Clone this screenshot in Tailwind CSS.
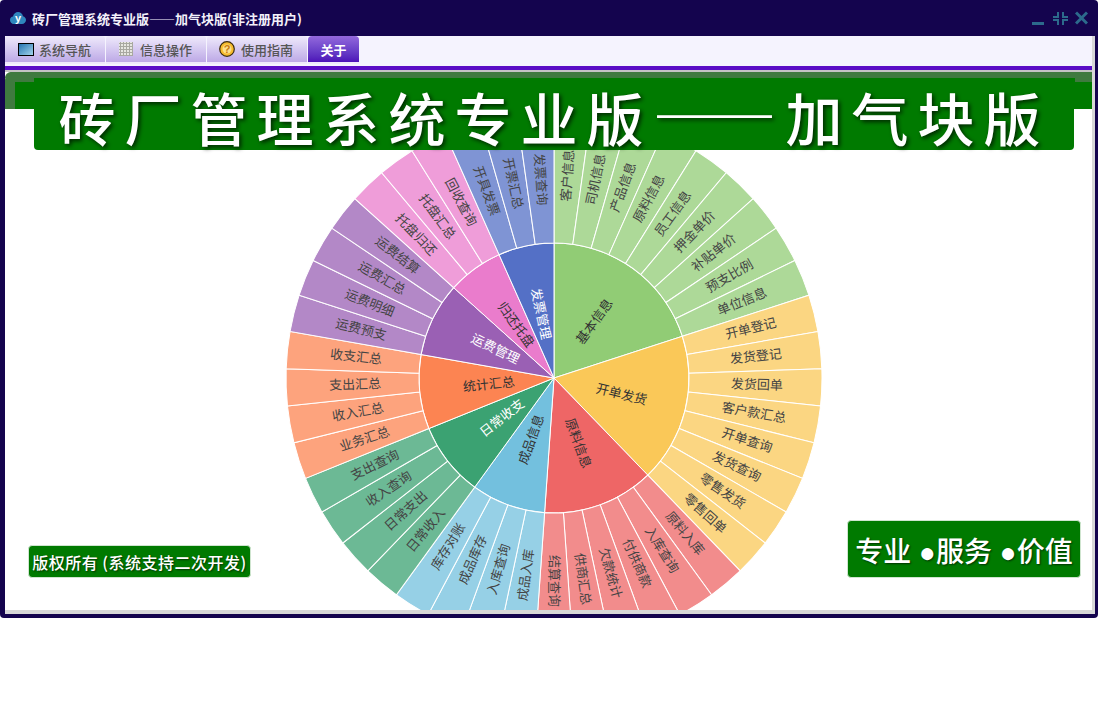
<!DOCTYPE html>
<html lang="zh-CN">
<head>
<meta charset="utf-8">
<title>砖厂管理系统专业版</title>
<script src="https://cdn.jsdelivr.net/npm/@tailwindcss/browser@4"></script>
</head>
<body class="bg-white font-['Noto_Sans_CJK_SC','Noto_Sans',sans-serif]">
<div class="w-[1099px] h-[723px] overflow-hidden bg-white">
  <div class="w-[1098px] h-[618px] bg-[#14044e] rounded-[4px] pl-[5px] pr-[3px] pb-[4px] flex flex-col">
    <!-- title bar -->
    <div class="h-[36px] shrink-0 flex items-center pr-[7px] -ml-[5px] pl-[10px]">
      <svg class="w-[16px] h-[14px] mr-[6px]" viewBox="0 0 16 14"><path d="M4 13C1.500 13 0 11 0 9C0 7 1.500 5.800 3 5.600C3.500 2.500 5.800 1 8 1C10.500 1 12.500 2.800 13 5.300C14.800 5.800 16 7.300 16 9C16 11.300 14.200 13 12 13Z" fill="#2f86bd"/><text x="8" y="11" text-anchor="middle" font-size="11" font-weight="700" fill="#fff" font-family="Liberation Sans">y</text></svg>
      <span class="text-[13px] font-bold text-[#f3f1fa] leading-none">砖厂管理系统专业版——加气块版(非注册用户)</span>
      <div class="ml-auto flex items-center gap-[7px]">
        <svg class="w-[14px] h-[14px]" viewBox="0 0 14 14"><rect x="0" y="11" width="12" height="3" fill="#2c6a8c"/></svg>
        <svg class="w-[15px] h-[14px]" viewBox="0 0 15 14" fill="none" stroke="#2c6a8c" stroke-width="2"><path d="M5 1V6H0M10 1V6H15M5 14V9H0M10 14V9H15"/></svg>
        <svg class="w-[13px] h-[14px]" viewBox="0 0 13 14" fill="none" stroke="#2c6a8c" stroke-width="3"><path d="M1 1.500L12 12.500M12 1.500L1 12.500"/></svg>
      </div>
    </div>
    <!-- body -->
    <div class="flex-1 min-h-0 bg-[#d8d8d8] pr-[3px] pb-[4px]">
      <div class="h-full flex flex-col">
        <!-- tabs -->
        <div class="h-[30px] shrink-0 bg-[#f5f3fe] flex gap-[1px]">
          <div class="w-[100px] h-[28px] rounded-t-[3px] border-b-2 border-[#efe9fb] bg-linear-to-b from-[#efeafb] to-[#bda9e6] flex items-center pl-[13px] gap-[5px]">
            <svg class="w-[16px] h-[13px]" viewBox="0 0 16 13"><defs><linearGradient id="mon" x1="0" y1="0" x2="1" y2="1"><stop offset="0" stop-color="#1f6fae"/><stop offset="1" stop-color="#a8d8ee"/></linearGradient></defs><rect x="0.500" y="0.500" width="15" height="12" fill="url(#mon)" stroke="#000"/></svg>
            <span class="text-[13px] font-medium text-[#555] leading-none pt-[1px]">系统导航</span>
          </div>
          <div class="w-[100px] h-[28px] rounded-t-[3px] border-b-2 border-[#efe9fb] bg-linear-to-b from-[#efeafb] to-[#bda9e6] flex items-center pl-[13px] gap-[7px]">
            <svg class="w-[14px] h-[14px]" viewBox="0 0 14 14"><rect width="14" height="14" fill="#e6e6e0"/><path d="M1.500 0V14M4.500 0V14M7.500 0V14M10.500 0V14M13.500 0V14M0 1.500H14M0 4.500H14M0 7.500H14M0 10.500H14M0 13.500H14" stroke="#a8a8a0" stroke-width="1"/></svg>
            <span class="text-[13px] font-medium text-[#555] leading-none pt-[1px]">信息操作</span>
          </div>
          <div class="w-[100px] h-[28px] rounded-t-[3px] border-b-2 border-[#efe9fb] bg-linear-to-b from-[#efeafb] to-[#bda9e6] flex items-center pl-[12px] gap-[6px]">
            <svg class="w-[16px] h-[16px]" viewBox="0 0 16 16"><circle cx="8" cy="8" r="7.300" fill="#f7bc2e" stroke="#3c2c10" stroke-width="1.200"/><circle cx="8" cy="8" r="4.500" fill="#fde08a"/><text x="8" y="12" text-anchor="middle" font-size="11" font-weight="700" fill="#c87a10" font-family="Liberation Sans">?</text></svg>
            <span class="text-[13px] font-medium text-[#555] leading-none pt-[1px]">使用指南</span>
          </div>
          <div class="w-[51px] h-[28px] rounded-t-[4px] border-b-2 border-[#efe9fb] bg-linear-to-b from-[#9468dc] to-[#4d0fb8] flex items-center justify-center">
            <span class="text-[13px] font-bold text-white leading-none">关于</span>
          </div>
        </div>
        <div class="h-[4px] shrink-0 bg-[#5a0cc6]"></div>
        <div class="h-[2px] shrink-0 bg-[#c4c4c4]"></div>
        <!-- content -->
        <div class="relative flex-1 min-h-0 bg-white overflow-hidden">
          <div class="h-[37px] bg-[#007a00] rounded-tl-[8px] border-l-[10px] border-[#3f7a3f] flex flex-col">
            <div class="h-[6px] -ml-[10px] bg-[#3f7a3f] rounded-tl-[8px]"></div>
            <div class="h-[4px] flex justify-between">
              <div class="w-[19px] bg-[#3f7a3f]"></div>
              <div class="w-[17px] bg-[#3f7a3f]"></div>
            </div>
          </div>
          <!-- sunburst -->
          <svg class="absolute left-0 top-0" width="1087" height="538" viewBox="0 0 1087 538" font-size="13" font-family="Noto Sans CJK SC, sans-serif" text-anchor="middle" dominant-baseline="central">
            <defs><path id="seg" d="M0 -135L0 -268A268 268 0 0 1 37.300 -265.390L18.790 -133.690A135 135 0 0 0 0 -135Z" stroke="#fff" stroke-width="1"/></defs>
            <g transform="translate(549 306)">
              <!-- inner ring -->
              <g stroke="#fff" stroke-width="1">
                <path d="M0 0L0 -135A135 135 0 0 1 128.390 -41.720Z" fill="#91cc75"/>
                <path d="M0 0L128.390 -41.720A135 135 0 0 1 93.780 97.110Z" fill="#fac858"/>
                <path d="M0 0L93.780 97.110A135 135 0 0 1 -9.420 134.670Z" fill="#ee6666"/>
                <path d="M0 0L-9.420 134.670A135 135 0 0 1 -79.350 109.220Z" fill="#73c0de"/>
                <path d="M0 0L-79.350 109.220A135 135 0 0 1 -125.170 50.570Z" fill="#3ba272"/>
                <path d="M0 0L-125.170 50.570A135 135 0 0 1 -132.950 -23.440Z" fill="#fc8452"/>
                <path d="M0 0L-132.950 -23.440A135 135 0 0 1 -100.330 -90.330Z" fill="#9a60b4"/>
                <path d="M0 0L-100.330 -90.330A135 135 0 0 1 -54.910 -123.330Z" fill="#ea7ccc"/>
                <path d="M0 0L-54.910 -123.330A135 135 0 0 1 0 -135Z" fill="#5470c6"/>
              </g>
              <!-- outer ring -->
              <g fill="#91cc75" fill-opacity="0.75">
                <use href="#seg"/><use href="#seg" transform="rotate(8)"/><use href="#seg" transform="rotate(16)"/><use href="#seg" transform="rotate(24)"/><use href="#seg" transform="rotate(32)"/><use href="#seg" transform="rotate(40)"/><use href="#seg" transform="rotate(48)"/><use href="#seg" transform="rotate(56)"/><use href="#seg" transform="rotate(64)"/>
              </g>
              <g fill="#fac858" fill-opacity="0.75">
                <use href="#seg" transform="rotate(72)"/><use href="#seg" transform="rotate(80)"/><use href="#seg" transform="rotate(88)"/><use href="#seg" transform="rotate(96)"/><use href="#seg" transform="rotate(104)"/><use href="#seg" transform="rotate(112)"/><use href="#seg" transform="rotate(120)"/><use href="#seg" transform="rotate(128)"/>
              </g>
              <g fill="#ee6666" fill-opacity="0.75">
                <use href="#seg" transform="rotate(136)"/><use href="#seg" transform="rotate(144)"/><use href="#seg" transform="rotate(152)"/><use href="#seg" transform="rotate(160)"/><use href="#seg" transform="rotate(168)"/><use href="#seg" transform="rotate(176)"/>
              </g>
              <g fill="#73c0de" fill-opacity="0.75">
                <use href="#seg" transform="rotate(184)"/><use href="#seg" transform="rotate(192)"/><use href="#seg" transform="rotate(200)"/><use href="#seg" transform="rotate(208)"/>
              </g>
              <g fill="#3ba272" fill-opacity="0.75">
                <use href="#seg" transform="rotate(216)"/><use href="#seg" transform="rotate(224)"/><use href="#seg" transform="rotate(232)"/><use href="#seg" transform="rotate(240)"/>
              </g>
              <g fill="#fc8452" fill-opacity="0.75">
                <use href="#seg" transform="rotate(248)"/><use href="#seg" transform="rotate(256)"/><use href="#seg" transform="rotate(264)"/><use href="#seg" transform="rotate(272)"/>
              </g>
              <g fill="#9a60b4" fill-opacity="0.75">
                <use href="#seg" transform="rotate(280)"/><use href="#seg" transform="rotate(288)"/><use href="#seg" transform="rotate(296)"/><use href="#seg" transform="rotate(304)"/>
              </g>
              <g fill="#ea7ccc" fill-opacity="0.75">
                <use href="#seg" transform="rotate(312)"/><use href="#seg" transform="rotate(320)"/><use href="#seg" transform="rotate(328)"/>
              </g>
              <g fill="#5470c6" fill-opacity="0.75">
                <use href="#seg" transform="rotate(336)"/><use href="#seg" transform="rotate(344)"/><use href="#seg" transform="rotate(352)"/>
              </g>
              <!-- inner labels -->
              <g fill="#333">
                <text transform="rotate(36) translate(0 -67.500) rotate(-90) translate(2 -1.500)">基本信息</text>
                <text transform="rotate(104) translate(0 -67.500) rotate(-90) translate(2 -1.500)">开单发货</text>
                <text transform="rotate(160) translate(0 -67.500) rotate(-90) translate(2 -1.500)">原料信息</text>
                <text transform="rotate(200) translate(0 -67.500) rotate(90) translate(2 -1.500)">成品信息</text>
                <text transform="rotate(232) translate(0 -67.500) rotate(90) translate(2 -1.500)" fill="#fff">日常收支</text>
                <text transform="rotate(264) translate(0 -67.500) rotate(90) translate(2 -1.500)">统计汇总</text>
                <text transform="rotate(296) translate(0 -67.500) rotate(90) translate(2 -1.500)" fill="#fff">运费管理</text>
                <text transform="rotate(324) translate(0 -67.500) rotate(90) translate(2 -1.500)">归还托盘</text>
                <text transform="rotate(348) translate(0 -67.500) rotate(90) translate(2 -1.500)" fill="#fff">发票管理</text>
              </g>
              <!-- outer labels -->
              <g fill="#444">
                <text transform="rotate(4) translate(0 -201) rotate(-90) translate(2 -1.500)">客户信息</text>
                <text transform="rotate(12) translate(0 -201) rotate(-90) translate(2 -1.500)">司机信息</text>
                <text transform="rotate(20) translate(0 -201) rotate(-90) translate(2 -1.500)">产品信息</text>
                <text transform="rotate(28) translate(0 -201) rotate(-90) translate(2 -1.500)">原料信息</text>
                <text transform="rotate(36) translate(0 -201) rotate(-90) translate(2 -1.500)">员工信息</text>
                <text transform="rotate(44) translate(0 -201) rotate(-90) translate(2 -1.500)">押金单价</text>
                <text transform="rotate(52) translate(0 -201) rotate(-90) translate(2 -1.500)">补贴单价</text>
                <text transform="rotate(60) translate(0 -201) rotate(-90) translate(2 -1.500)">预支比例</text>
                <text transform="rotate(68) translate(0 -201) rotate(-90) translate(2 -1.500)">单位信息</text>
                <text transform="rotate(76) translate(0 -201) rotate(-90) translate(2 -1.500)">开单登记</text>
                <text transform="rotate(84) translate(0 -201) rotate(-90) translate(2 -1.500)">发货登记</text>
                <text transform="rotate(92) translate(0 -201) rotate(-90) translate(2 -1.500)">发货回单</text>
                <text transform="rotate(100) translate(0 -201) rotate(-90) translate(2 -1.500)">客户款汇总</text>
                <text transform="rotate(108) translate(0 -201) rotate(-90) translate(2 -1.500)">开单查询</text>
                <text transform="rotate(116) translate(0 -201) rotate(-90) translate(2 -1.500)">发货查询</text>
                <text transform="rotate(124) translate(0 -201) rotate(-90) translate(2 -1.500)">零售发货</text>
                <text transform="rotate(132) translate(0 -201) rotate(-90) translate(2 -1.500)">零售回单</text>
                <text transform="rotate(140) translate(0 -201) rotate(-90) translate(2 -1.500)">原料入库</text>
                <text transform="rotate(148) translate(0 -201) rotate(-90) translate(2 -1.500)">入库查询</text>
                <text transform="rotate(156) translate(0 -201) rotate(-90) translate(2 -1.500)">付供商款</text>
                <text transform="rotate(164) translate(0 -201) rotate(-90) translate(2 -1.500)">欠款统计</text>
                <text transform="rotate(172) translate(0 -201) rotate(-90) translate(2 -1.500)">供商汇总</text>
                <text transform="rotate(180) translate(0 -201) rotate(-90) translate(2 -1.500)">结算查询</text>
                <text transform="rotate(188) translate(0 -201) rotate(90) translate(2 -1.500)">成品入库</text>
                <text transform="rotate(196) translate(0 -201) rotate(90) translate(2 -1.500)">入库查询</text>
                <text transform="rotate(204) translate(0 -201) rotate(90) translate(2 -1.500)">成品库存</text>
                <text transform="rotate(212) translate(0 -201) rotate(90) translate(2 -1.500)">库存对账</text>
                <text transform="rotate(220) translate(0 -201) rotate(90) translate(2 -1.500)">日常收入</text>
                <text transform="rotate(228) translate(0 -201) rotate(90) translate(2 -1.500)">日常支出</text>
                <text transform="rotate(236) translate(0 -201) rotate(90) translate(2 -1.500)">收入查询</text>
                <text transform="rotate(244) translate(0 -201) rotate(90) translate(2 -1.500)">支出查询</text>
                <text transform="rotate(252) translate(0 -201) rotate(90) translate(2 -1.500)">业务汇总</text>
                <text transform="rotate(260) translate(0 -201) rotate(90) translate(2 -1.500)">收入汇总</text>
                <text transform="rotate(268) translate(0 -201) rotate(90) translate(2 -1.500)">支出汇总</text>
                <text transform="rotate(276) translate(0 -201) rotate(90) translate(2 -1.500)">收支汇总</text>
                <text transform="rotate(284) translate(0 -201) rotate(90) translate(2 -1.500)">运费预支</text>
                <text transform="rotate(292) translate(0 -201) rotate(90) translate(2 -1.500)">运费明细</text>
                <text transform="rotate(300) translate(0 -201) rotate(90) translate(2 -1.500)">运费汇总</text>
                <text transform="rotate(308) translate(0 -201) rotate(90) translate(2 -1.500)">运费结算</text>
                <text transform="rotate(316) translate(0 -201) rotate(90) translate(2 -1.500)">托盘归还</text>
                <text transform="rotate(324) translate(0 -201) rotate(90) translate(2 -1.500)">托盘汇总</text>
                <text transform="rotate(332) translate(0 -201) rotate(90) translate(2 -1.500)">回收查询</text>
                <text transform="rotate(340) translate(0 -201) rotate(90) translate(2 -1.500)">开具发票</text>
                <text transform="rotate(348) translate(0 -201) rotate(90) translate(2 -1.500)">开票汇总</text>
                <text transform="rotate(356) translate(0 -201) rotate(90) translate(2 -1.500)">发票查询</text>
              </g>
            </g>
          </svg>
          <!-- banner -->
          <div class="absolute left-[29px] top-[8px] w-[1040px] h-[70px] bg-[#007a00] rounded-b-[4px] flex items-center justify-center pb-[2px] text-[57px] font-medium leading-none tracking-[9px] whitespace-nowrap text-white [text-shadow:2px_2px_4px_rgba(0,0,0,0.7)]"><span>砖厂管理系统专业版<span class="text-[62px]">——</span>加气块版</span></div>
          <!-- badges -->
          <div class="absolute left-[23px] top-[473px] w-[223px] h-[33px] bg-[#007a00] rounded-[4px] border border-[#cfe5cf] flex items-center justify-center text-[16px] font-medium tracking-[0.5px] whitespace-nowrap text-white [text-shadow:1px_1px_2px_rgba(0,0,0,0.6)]">版权所有 (系统支持二次开发)</div>
          <div class="absolute left-[842px] top-[448px] w-[234px] h-[58px] bg-[#007a00] rounded-[4px] border border-[#cfe5cf] flex items-center justify-center pt-[7px] text-[28px] font-medium font-['Liberation_Sans','Noto_Sans_CJK_SC',sans-serif] whitespace-nowrap text-white [text-shadow:1px_1px_2px_rgba(0,0,0,0.6)]">专业 ●服务 ●价值</div>
        </div>
      </div>
    </div>
  </div>
</div>
</body>
</html>
